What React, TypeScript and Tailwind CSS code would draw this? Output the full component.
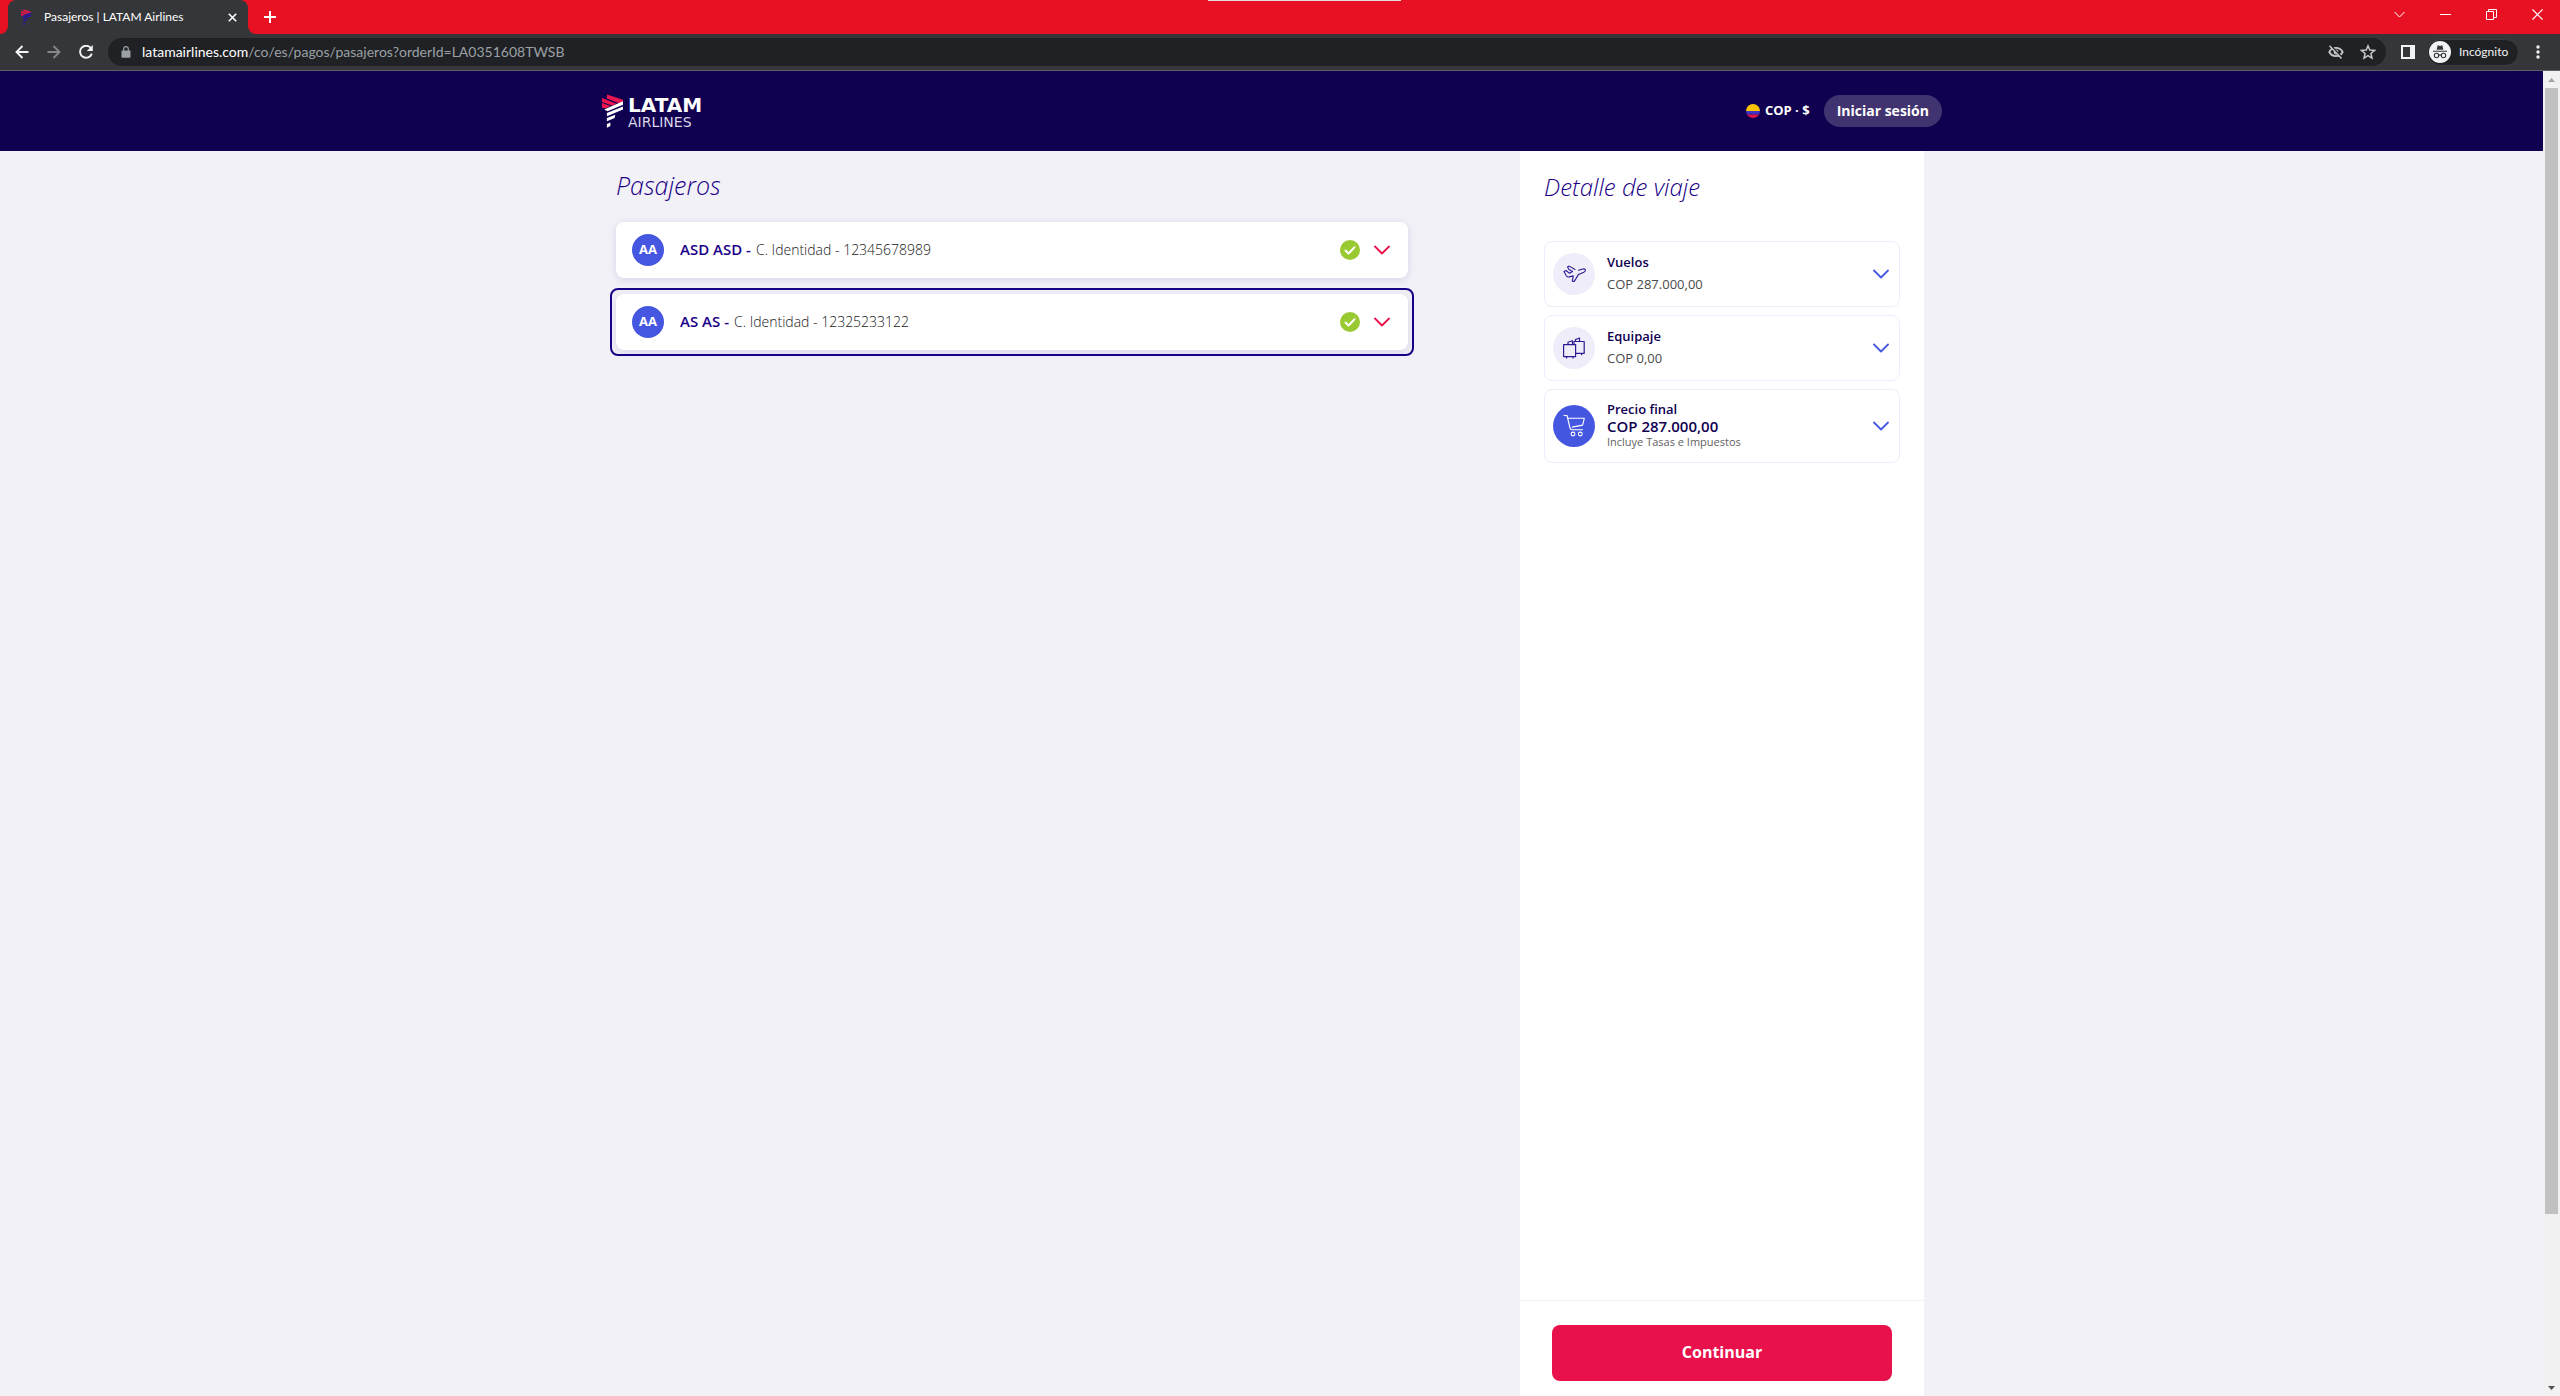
import type { ReactNode } from "react";

type IconProps = { className?: string };

function Symbol({ className, band }: { className: string; band: string }) {
  return (
    <svg viewBox="36 44 60 96" className={className} aria-hidden="true">
      <g fill="#ed1650">
        <path d="M50 45 96 60v6l-12 4L50 56Z" />
        <path d="M36 55 78 71l-13 5L36 66Z" />
        <path d="M36 69 60 78l-13 6-11-1Z" />
      </g>
      <g fill={band}>
        <path d="M42 88 96 64v10L52 93Z" />
        <path d="M50 98 96 79v9L50 107Z" />
        <path d="M50 112 74 103l-2 9-22 9Z" />
        <path d="M50 129 60 125v10l-10 5Z" />
      </g>
    </svg>
  );
}

function Arrow({ className }: IconProps) {
  return (
    <svg viewBox="0 0 14 14" className={className} fill="none" stroke="currentColor" strokeWidth="1.9" aria-hidden="true">
      <path d="M13.5 7H1.5M7.5 1 1.5 7l6 6" />
    </svg>
  );
}

function Chevron({ className }: IconProps) {
  return (
    <svg viewBox="0 0 16 10" className={className} fill="none" stroke="currentColor" strokeWidth="1.8" strokeLinecap="round" strokeLinejoin="round" aria-hidden="true">
      <path d="M1 1.5 8 8.5l7-7" />
    </svg>
  );
}

function WindowButton({ label, children }: { label: string; children: ReactNode }) {
  return (
    <button aria-label={label} className="flex h-7 w-[46px] items-center justify-center text-white">
      <svg viewBox="0 0 11 11" className="size-[11px]" fill="none" stroke="currentColor" aria-hidden="true">
        {children}
      </svg>
    </button>
  );
}

function TitleBar() {
  return (
    <div className="relative flex h-[34px] items-start justify-between bg-[#e81123]">
      <div className="absolute left-1/2 top-0 h-px w-[193px] -translate-x-[72px] bg-[#e3dede]" />
      <div className="flex h-full items-center">
        <div className="flex h-full w-2 items-end bg-[#35363a]">
          <div className="h-full w-full rounded-br-lg bg-[#e81123]" />
        </div>
        <div className="flex h-full w-60 items-center rounded-t-lg bg-[#35363a] pl-3 pr-2 text-xs text-white">
          <Symbol className="h-4 w-3" band="#2a14a5" />
          <span className="ml-3 flex-1 whitespace-nowrap">Pasajeros | LATAM Airlines</span>
          <button aria-label="Cerrar pestaña" className="flex size-4 items-center justify-center">
            <svg viewBox="0 0 9 9" className="size-[9px]" stroke="currentColor" strokeWidth="1.6" aria-hidden="true">
              <path d="m.8.8 7.4 7.4M8.2.8.8 8.2" />
            </svg>
          </button>
        </div>
        <div className="h-full w-2 bg-[#35363a]">
          <div className="h-full w-full rounded-bl-lg bg-[#e81123]" />
        </div>
        <button aria-label="Nueva pestaña" className="flex size-7 items-center justify-center text-white">
          <svg viewBox="0 0 12 12" className="size-3" stroke="currentColor" strokeWidth="2" aria-hidden="true">
            <path d="M6 0v12M0 6h12" />
          </svg>
        </button>
      </div>
      <div className="flex">
        <WindowButton label="Buscar pestañas"><path d="m.5 3 5 5 5-5" /></WindowButton>
        <WindowButton label="Minimizar"><path d="M0 5.5h11" /></WindowButton>
        <WindowButton label="Restaurar"><path d="M.5 2.5h7v8h-7ZM2.5 2.5v-2h8v8h-3" /></WindowButton>
        <WindowButton label="Cerrar"><path d="m.5.5 10 10M10.5.5l-10 10" strokeWidth="1.2" /></WindowButton>
      </div>
    </div>
  );
}

function ToolBar() {
  return (
    <div className="flex h-[37px] items-center border-b border-[#5f6064] bg-[#35363a] text-[#f1f3f4]">
      <nav className="flex w-[108px] items-center pl-[15px]" aria-label="Navegación">
        <button aria-label="Atrás" className="mr-[18px]"><Arrow className="size-3.5" /></button>
        <button aria-label="Adelante" className="mr-[18px] text-[#85868a]"><Arrow className="size-3.5 rotate-180" /></button>
        <button aria-label="Recargar">
          <svg viewBox="0 0 14 14" className="size-3.5" fill="none" stroke="currentColor" strokeWidth="1.9" aria-hidden="true">
            <path d="M12 3.3A6 6 0 1 0 12.8 8.6" />
            <path d="M13.8 0v6H7.8Z" fill="currentColor" stroke="none" />
          </svg>
        </button>
      </nav>
      <div className="flex h-7 flex-1 items-center rounded-full bg-[#202124] pl-[13px] pr-[10px]">
        <svg viewBox="0 0 10 12" className="h-3 w-2.5 text-[#9aa0a6]" aria-hidden="true">
          <path d="M1 4.5h8q.5 0 .5.5v6q0 .8-.8.8H1.3q-.8 0-.8-.8V5q0-.5.5-.5Z" fill="currentColor" />
          <path d="M2.7 5V3a2.3 2.3 0 0 1 4.6 0v2" fill="none" stroke="currentColor" strokeWidth="1.2" />
        </svg>
        <a href="#" className="ml-[11px] flex-1 text-sm text-[#9aa0a6]">
          <span className="text-white">latamairlines.com</span>/co/es/pagos/pasajeros?orderId=LA0351608TWSB
        </a>
        <button aria-label="Cookies de terceros bloqueadas" className="mr-4 text-[#c4c6c9]">
          <svg viewBox="0 0 16 14" className="h-3.5 w-4" fill="none" stroke="currentColor" aria-hidden="true">
            <path d="M1.3 7C4 1.6 12 1.6 14.7 7 12 12.4 4 12.4 1.3 7Z" strokeWidth="1.8" />
            <circle cx="8" cy="7" r="2.4" fill="currentColor" stroke="none" />
            <path d="m2.6.6 12 12.8" stroke="#202124" strokeWidth="2" />
            <path d="m1.5.8 12 12.7" strokeWidth="1.5" />
          </svg>
        </button>
        <button aria-label="Añadir a marcadores" className="text-[#c4c6c9]">
          <svg viewBox="0 0 16 16" className="size-4" fill="none" stroke="currentColor" strokeWidth="1.5" aria-hidden="true">
            <path d="m8 1.8 1.8 4.3 4.7.4-3.6 3 1.1 4.6L8 11.6l-4 2.5 1.1-4.6-3.6-3 4.7-.4Z" />
          </svg>
        </button>
      </div>
      <button aria-label="Panel lateral" className="ml-[15px] mr-3">
        <svg viewBox="0 0 14 14" className="size-3.5" aria-hidden="true">
          <path d="M0 0h14v14H0ZM2 2v10h7V2Z" fill="currentColor" fillRule="evenodd" />
        </svg>
      </button>
      <button className="flex h-[27px] w-[92px] items-center rounded-full border border-[#3d3e42] bg-[#202124] pl-px text-xs">
        <svg viewBox="0 0 22 22" className="size-[22px]" fill="none" stroke="#35363a" strokeWidth="1.1" aria-hidden="true">
          <circle cx="11" cy="11" r="11" fill="#f1f3f4" stroke="none" />
          <path d="M7.6 8.8 8.7 4.3l2.3.6 2.3-.6 1.1 4.5Z" fill="#35363a" stroke="none" />
          <path d="M4 10.3h14M9.8 14.3q1.2-.8 2.4 0" />
          <circle cx="7.5" cy="14.5" r="2.2" />
          <circle cx="14.5" cy="14.5" r="2.2" />
        </svg>
        <span className="ml-2">Incógnito</span>
      </button>
      <button aria-label="Menú" className="ml-[17px] mr-5">
        <svg viewBox="0 0 4 14" className="h-3.5 w-1" fill="currentColor" aria-hidden="true">
          <circle cx="2" cy="2" r="1.7" /><circle cx="2" cy="7" r="1.7" /><circle cx="2" cy="12" r="1.7" />
        </svg>
      </button>
    </div>
  );
}

function SiteHeader() {
  return (
    <header className="bg-[#10004f] text-white">
      <div className="mx-auto flex h-20 w-full max-w-[1341px] items-center justify-between">
        <a href="#" className="flex items-center gap-[5px] pl-px" aria-label="LATAM Airlines">
          <Symbol className="h-[34px] w-[21px]" band="#ffffff" />
          <span className="flex flex-col pt-1 font-['DejaVu_Sans']">
            <span className="text-xl font-bold leading-[18px]">LATAM</span>
            <span className="text-sm leading-4 text-[#d9d5e8]">AIRLINES</span>
          </span>
        </a>
        <div className="flex items-center">
          <button className="flex items-center gap-[5px] text-[13px] font-bold">
            <svg viewBox="0 0 14 14" className="size-3.5" aria-hidden="true">
              <clipPath id="flag"><circle cx="7" cy="7" r="7" /></clipPath>
              <g clipPath="url(#flag)">
                <path d="M0 0h14v7H0Z" fill="#ffc400" />
                <path d="M0 7h14v3.5H0Z" fill="#3d33c4" />
                <path d="M0 10.5h14V14H0Z" fill="#d8144a" />
              </g>
            </svg>
            COP · $
          </button>
          <button className="ml-3.5 h-8 rounded-full bg-[#40336f] px-[13px] text-sm font-bold">Iniciar sesión</button>
        </div>
      </div>
    </header>
  );
}

function PassengerCard({ name, doc, active }: { name: string; doc: string; active?: boolean }) {
  const card = (
    <button className="flex h-14 w-full items-center rounded-lg bg-white pl-4 pr-[18px] text-left shadow-[0_2px_8px_rgba(27,0,136,0.12)]">
      <span className="flex size-8 items-center justify-center rounded-full bg-[#4557e0] text-[13px] font-bold text-white">AA</span>
      <span className="ml-4 flex flex-1 items-baseline gap-[5px] pb-0.5">
        <strong className="text-[15px] font-semibold text-[#1b0088]">{name} -</strong>
        <span className="text-sm font-light text-[#202020]">C. Identidad - {doc}</span>
      </span>
      <svg viewBox="0 0 20 20" className="size-5" aria-hidden="true">
        <circle cx="10" cy="10" r="10" fill="#9aca32" />
        <path d="m5.500 10.500 3 3 6-6.300" fill="none" stroke="#fff" strokeWidth="2" strokeLinecap="round" strokeLinejoin="round" />
      </svg>
      <Chevron className="ml-3.5 h-2.5 w-4 text-[#e8114b]" />
    </button>
  );
  return active ? <div className="-mx-1.5 -mt-1.5 rounded-lg border-2 border-[#1b0088] p-1">{card}</div> : card;
}

function PlaneIcon() {
  return (
    <svg viewBox="0 0 24 24" className="size-6" fill="none" stroke="#2d1a94" strokeWidth="1.1" strokeLinejoin="round" strokeLinecap="round" aria-hidden="true">
      <path d="M10.5 9.500 7 7.500 5.500 5l1.700-.9L13 7.500" />
      <path d="M10.500 9.500 7.500 11.200 4 8.500l-2 1 2.300 4.200q1 1.600 3 1.200l4-1-1 5.300 2 .2 4.200-7 5.300-2.200q2-1 1.500-2.500-.6-1.200-2.600-.7l-4.200 1.300" />
    </svg>
  );
}

function BagsIcon() {
  return (
    <svg viewBox="0 0 24 24" className="size-6" fill="none" stroke="#2d1a94" strokeWidth="1.2" strokeLinejoin="round" aria-hidden="true">
      <path d="M1.600 8.600h12v12h-12ZM4.600 20.600v2M11 20.600v2" />
      <path d="M6 8.500V6.300l4.500-1.500v3.700" />
      <path d="M12 8.300V5.500h10.200v11.800h-8.500M19.600 17.300v2M13.500 5.300V3.500l4-1.500v3.500" />
    </svg>
  );
}

function CartIcon() {
  return (
    <svg viewBox="0 0 24 24" className="size-6" fill="none" stroke="#fff" strokeWidth="1.1" strokeLinejoin="round" strokeLinecap="round" aria-hidden="true">
      <path d="M2 1.500h3l3 12.500q.4 1.700 2 1.700h10.500M6 4.300h16.300l-1.700 6.800-10.300 2" />
      <circle cx="11" cy="20" r="1.900" />
      <circle cx="18.300" cy="20" r="1.900" />
    </svg>
  );
}

function DetailCard({ icon, strong, children }: { icon: ReactNode; strong?: boolean; children: ReactNode }) {
  return (
    <button className={`flex w-full items-center rounded-lg border border-[#eeecfa] pl-2 pr-2.5 text-left ${strong ? "h-[74px]" : "h-[66px]"}`}>
      <span className={`flex size-[42px] items-center justify-center rounded-full ${strong ? "bg-[#4557e0]" : "bg-[#efedf9]"}`}>{icon}</span>
      <span className="ml-3 flex flex-1 flex-col pb-0.5">{children}</span>
      <Chevron className="h-2.5 w-4 text-[#4557e0]" />
    </button>
  );
}

function ScrollBar() {
  return (
    <div className="flex w-[17px] flex-col items-center bg-[#f1f1f1]" aria-hidden="true">
      <svg viewBox="0 0 17 17" className="size-[17px]"><path d="M5 11h7L8.500 7Z" fill="#a3a3a3" /></svg>
      <div className="w-[13px] grow-[1126] bg-[#c1c1c1]" />
      <div className="grow-[165]" />
      <svg viewBox="0 0 17 17" className="size-[17px]"><path d="M5 7h7l-3.500 4Z" fill="#505050" /></svg>
    </div>
  );
}

export default function App() {
  return (
    <div className="flex h-screen flex-col overflow-hidden font-['Lato',sans-serif]">
      <TitleBar />
      <ToolBar />
      <div className="flex min-h-0 flex-1">
        <div className="flex min-w-0 flex-1 flex-col bg-[#f2f1f7] font-['Open_Sans',sans-serif]">
          <SiteHeader />
          <div className="mx-auto flex w-full max-w-[1341px] flex-1 justify-between pl-[15px] pr-[18px]">
            <main className="w-full max-w-[792px] pt-[18px]">
              <h1 className="text-[25px] font-light italic leading-8 text-[#1b0088]">Pasajeros</h1>
              <div className="mt-[21px] flex flex-col gap-4">
                <PassengerCard name="ASD ASD" doc="12345678989" />
                <PassengerCard name="AS AS" doc="12325233122" active />
              </div>
            </main>
            <aside className="flex w-[404px] flex-col bg-white">
              <div className="flex flex-1 flex-col px-6 pt-5">
                <h2 className="text-2xl font-light italic leading-8 text-[#1b0088]">Detalle de viaje</h2>
                <div className="mt-[38px] flex flex-col gap-2">
                  <DetailCard icon={<PlaneIcon />}>
                    <span className="text-[13px] font-semibold leading-[22px] text-[#10004f]">Vuelos</span>
                    <span className="text-[13px] leading-[22px] text-[#4a4a4a]">COP 287.000,00</span>
                  </DetailCard>
                  <DetailCard icon={<BagsIcon />}>
                    <span className="text-[13px] font-semibold leading-[22px] text-[#10004f]">Equipaje</span>
                    <span className="text-[13px] leading-[22px] text-[#4a4a4a]">COP 0,00</span>
                  </DetailCard>
                  <DetailCard icon={<CartIcon />} strong>
                    <span className="text-[13px] font-semibold leading-4 text-[#10004f]">Precio final</span>
                    <span className="text-[15px] font-semibold leading-[18px] text-[#10004f]">COP 287.000,00</span>
                    <span className="text-[11px] leading-[14px] text-[#626262]">Incluye Tasas e Impuestos</span>
                  </DetailCard>
                </div>
              </div>
              <div className="border-t border-[#f2f1f7] px-8 pb-[15px] pt-6">
                <button className="h-14 w-full rounded-lg bg-[#e8114b] pb-0.5 text-base font-bold text-white">Continuar</button>
              </div>
            </aside>
          </div>
        </div>
        <ScrollBar />
      </div>
    </div>
  );
}
